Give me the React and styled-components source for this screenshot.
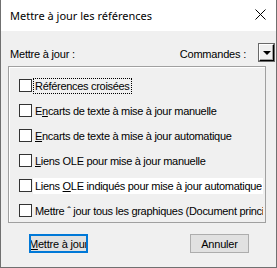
import styled, { createGlobalStyle } from "styled-components";

const Global = createGlobalStyle`
  body {
    margin: 0;
    background: #ffffff;
  }
`;

const Dialog = styled.div`
  width: 277px;
  height: 268px;
  box-sizing: border-box;
  border: 1px solid #707070;
  border-top: none;
  background: #f0f0f0;
  display: flex;
  flex-direction: column;
  font-family: "Liberation Sans", Arial, sans-serif;
  font-size: 11px;
  letter-spacing: -0.2px;
  color: #000;
`;

const TitleBar = styled.div`
  height: 31px;
  background: #fff;
  display: flex;
  align-items: center;
  justify-content: space-between;
  padding: 0 10px 0 9px;
  font-family: "Noto Sans", "Liberation Sans", sans-serif;
  font-size: 11px;
  letter-spacing: 0;
  flex-shrink: 0;
`;

const Close = styled.svg`
  width: 11px;
  height: 11px;
  margin-top: -2px;
`;

const Body = styled.div`
  padding: 12px 2px 0 7px;
  display: flex;
  flex-direction: column;
`;

const HeaderRow = styled.div`
  display: flex;
  align-items: center;
  height: 19px;
  padding-left: 2px;
`;

const Label = styled.span`
  flex: ${(p) => (p.$grow ? 1 : "none")};
  padding-top: 3px;
`;

const DropButton = styled.div`
  width: 15px;
  height: 17px;
  box-sizing: border-box;
  margin-left: 13px;
  background: #f0f0f0;
  border: 1px solid #000;
  border-top-color: #fff;
  border-left-color: #fff;
  box-shadow: inset -1px -1px 0 #a0a0a0;
  outline: 1px solid #696969;
  display: flex;
  align-items: center;
  justify-content: center;
`;

const Arrow = styled.div`
  width: 0;
  height: 0;
  border-left: 4px solid transparent;
  border-right: 4px solid transparent;
  border-top: 4px solid #000;
`;

const ListPanel = styled.div`
  margin-top: 4px;
  width: 258px;
  height: 157px;
  box-sizing: border-box;
  border: 1px solid #a0a0a0;
  box-shadow: inset 1px 1px 0 #fff;
  padding: 6px 2px 0 0;
  overflow: hidden;
`;

const Row = styled.div`
  height: 25px;
  display: flex;
  align-items: center;
  padding-left: 10px;
  white-space: nowrap;
  overflow: hidden;
  letter-spacing: -0.3px;
`;

const Box = styled.span`
  width: 13px;
  height: 13px;
  box-sizing: border-box;
  border: 1px solid #333;
  background: #fff;
  flex-shrink: 0;
`;

const RowText = styled.span`
  margin-left: 1px;
  padding: 1px;
  border: 1px dotted ${(p) => (p.$focused ? "#000" : "transparent")};
  background: ${(p) => (p.$hover ? "#fff" : "transparent")};
  flex: ${(p) => (p.$hover ? 1 : "none")};
  overflow: hidden;
`;

const Key = styled.span`
  text-decoration: underline;
`;

const ButtonRow = styled.div`
  display: flex;
  justify-content: space-between;
  padding: 11px 25px 0 21px;
`;

const Button = styled.div`
  width: 59px;
  height: 19px;
  box-sizing: border-box;
  background: #e1e1e1;
  border: ${(p) => (p.$primary ? "2px solid #0078d7" : "1px solid #adadad")};
  display: flex;
  align-items: center;
  justify-content: center;
  overflow: hidden;
  white-space: nowrap;
`;

const rows = [
  { text: <>Références croisées</>, focused: true },
  { text: <>E<Key>n</Key>carts de texte à mise à jour manuelle</> },
  { text: <><Key>E</Key>ncarts de texte à mise à jour automatique</> },
  { text: <><Key>L</Key>iens OLE pour mise à jour manuelle</> },
  { text: <>Liens <Key>O</Key>LE indiqués pour mise à jour automatique</>, hover: true },
  { text: <>Mettre ˆ  jour tous les graphiques  (Document principal)</> },
];

export default function App() {
  return (
    <>
      <Global />
      <Dialog>
        <TitleBar>
          <span>Mettre à jour les références</span>
          <Close viewBox="0 0 11 11">
            <path d="M0.5 0.5 L10.5 10.5 M10.5 0.5 L0.5 10.5" stroke="#000" strokeWidth="1" />
          </Close>
        </TitleBar>
        <Body>
          <HeaderRow>
            <Label $grow>Mettre à jour :</Label>
            <Label>Commandes :</Label>
            <DropButton>
              <Arrow />
            </DropButton>
          </HeaderRow>
          <ListPanel>
            {rows.map((r, i) => (
              <Row key={i}>
                <Box />
                <RowText $focused={r.focused} $hover={r.hover}>
                  {r.text}
                </RowText>
              </Row>
            ))}
          </ListPanel>
          <ButtonRow>
            <Button $primary>
              <Key>M</Key>ettre à jour
            </Button>
            <Button>Annuler</Button>
          </ButtonRow>
        </Body>
      </Dialog>
    </>
  );
}
